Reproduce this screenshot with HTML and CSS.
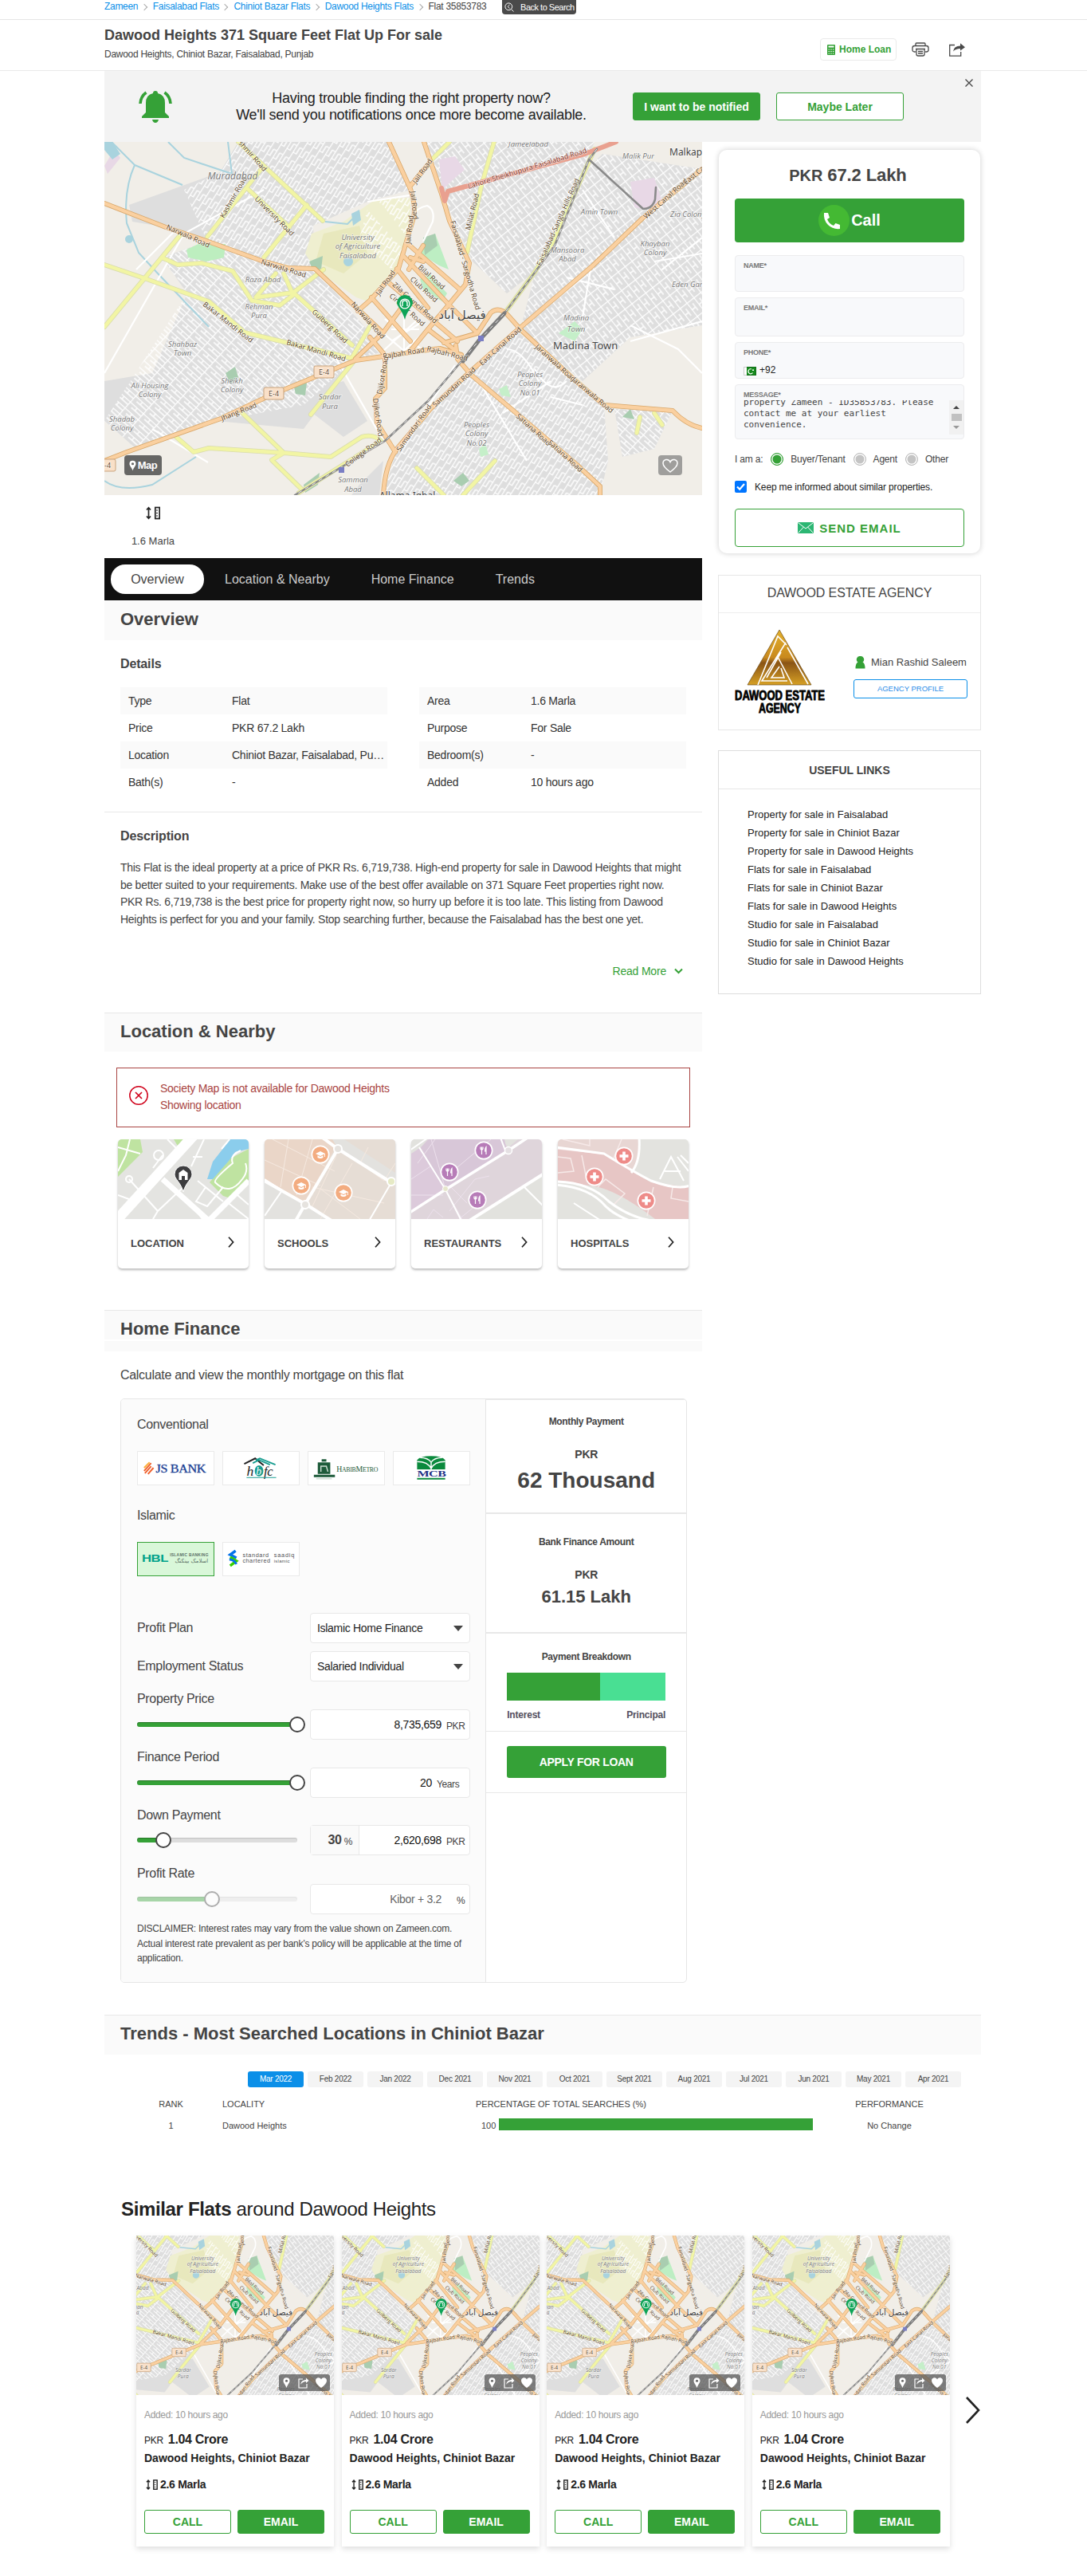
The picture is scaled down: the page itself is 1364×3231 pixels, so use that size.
FILE: index.html
```html
<!DOCTYPE html>
<html lang="en">
<head>
<meta charset="utf-8">
<title>Dawood Heights 371 Square Feet Flat Up For sale</title>
<link rel="stylesheet" href="styles.css">
</head>
<body>
<svg class="defs" aria-hidden="true">
  <defs>
    <pattern id="st-a" width="19" height="9" patternUnits="userSpaceOnUse" patternTransform="rotate(-58)"><path d="M0 .5H19M.5 0V5M10 5V9M0 5H10" stroke="#fff" stroke-width="1.3"/></pattern>
    <pattern id="st-b" width="11" height="21" patternUnits="userSpaceOnUse" patternTransform="rotate(-38)"><path d="M0 .5H11M.5 0V21M6 5V16M0 11H6" stroke="#fff" stroke-width="1.4"/></pattern>
    <pattern id="st-c" width="22" height="10" patternUnits="userSpaceOnUse" patternTransform="rotate(42)"><path d="M0 .5H22M.5 0V10M12 0V5M6 5H22" stroke="#fff" stroke-width="1.4"/></pattern>
    <g id="citymap">
      <rect width="750" height="443" fill="#f1eee8"/>
      <g id="zones" fill="#dedede">
        <path d="M31 79 145 38 168 0H357L384 60 330 75 262 105 264 159 200 150 77 107 35 100Z"/>
        <path d="M72 145 120 128 230 158H264L352 262 313 274 250 360 140 350 40 385 0 350V300L60 290 104 190Z"/>
        <path d="M401 0H615L563 125 541 162 505 190 462 150 423 65Z"/>
        <path d="M625 15 750 34V230L660 245 600 300 522 235 541 162 563 125 610 30Z"/>
        <path d="M458 289 517 237 586 295 627 330 632 400 622 443H350L367 385 409 335Z"/>
        <path d="M640 335 713 337 690 385 650 395ZM320 430 350 400 345 443H310ZM235 320 300 300 330 350 300 370Z"/>
      </g>
      <path d="M100 60 145 38 168 0H357L384 60 330 75 262 105 264 159 200 150 130 127Z" fill="url(#st-a)"/>
      <path d="M72 145 120 128 230 158H264L352 262 313 274 250 330 140 350 40 385 0 350 104 190Z" fill="url(#st-c)"/>
      <path d="M401 0H615L563 125 541 162 505 190 462 150 423 65Z" fill="url(#st-b)"/>
      <path d="M625 15 750 34V230L660 245 600 300 522 235 541 162 563 125 610 30Z" fill="url(#st-b)"/>
      <path d="M458 289 517 237 586 295 627 330 632 400 622 443H350L367 385 409 335Z" fill="url(#st-a)"/>
      <path d="M640 335 713 337 690 385 650 395Z" fill="url(#st-c)"/>
      <path d="M260 115 300 100 340 72 384 70 384 125 366 160 330 200 316 195 264 159 252 140Z" fill="#efefd0"/>
      <path d="M275 115 320 105 330 140 300 165 265 150Z" fill="#e8e8bd"/>
      <path d="M340 72 384 70 380 120 350 80ZM330 85 375 135 360 160 320 120Z" fill="url(#st-a)"/>
      <path d="M103 135 118 128 152 128 150 145 128 150 105 145Z" fill="#bdeebf"/>
      <path d="M396 140 415 115 432 160 420 155ZM396 172 408 165 430 190 424 200 400 185Z" fill="#bdeec3"/>
      <path d="M400 120 415 115 418 130 402 142ZM257 150 274 143 272 160 262 162Z" fill="#a9cdb0"/>
      <path d="M152 290 164 282 168 295 158 304ZM238 308 254 302 252 318 240 316ZM438 425 450 415 458 425 448 432ZM650 345 660 335 665 348ZM250 430 270 415 268 430 252 440Z" fill="#a9cdb0"/>
      <path d="M420 22 440 18 452 35 440 45 424 60ZM660 50 690 45 700 75 680 85 665 82ZM0 30 12 10 20 20 4 40Z" fill="#e8d8e6"/>
      <path d="M0 0 10 0 20 15 10 22 0 10ZM310 90 320 85 322 98 312 105ZM312 150a6 6 0 1 1-12 0 6 6 0 1 1 12 0M36 122a5 5 0 1 1-10 0 5 5 0 1 1 10 0" fill="#a9d3de"/>
      <path d="M570 240 590 225 600 235 590 250ZM495 310 505 305 510 320 498 318ZM470 385 478 378 482 392 472 395Z" fill="#c5efc9"/>
      <g fill="none" stroke="#a9d3de" stroke-width="2">
        <path d="M9 0 38 29Q24 60 28 102L43 139 67 165 131 232M80 0 100 20 160 40 155 0M38 29 98 54M115 395 60 430Q20 440 0 425M277 100 305 103 320 88"/>
      </g>
      <g fill="none" stroke="#fff" stroke-width="2.2">
        <path d="M0 290 100 115 200 60M40 160 90 110 140 130M330 75 390 66M350 240 376 262 400 240M376 215V262M352 222 400 262M360 235H395M350 262 394 222M360 250 395 228M290 270 350 375M60 360 130 402M440 280 375 380M660 250 750 225M660 230 720 260 750 290M700 160 750 120M690 150 750 140M640 120 600 60M580 170 640 185M610 160 600 220M470 300 530 400M500 340 560 300M540 285Q560 320 580 300M560 320 600 330"/>
        <path d="M385 115Q380 85 405 80 415 85 412 100L400 125M505 260Q525 260 545 300"/>
      </g>
      <g fill="none" stroke-linejoin="round" stroke-linecap="round">
        <g stroke="#d9dcae" stroke-width="6">
          <path id="ylw" d="M168 0 200 30 274 99M200 30 180 55 129 119M180 59 232 107M254 79 200 145M95 117 0 232M0 154 53 172 131 200 176 239 313 272M72 145 92 154 122 152 161 162 185 199 220 205 237 192 225 165M237 189 311 255M237 189 275 160M237 189 190 195 215 165M90 370 112 389 131 384 225 390 284 395 323 370Q338 366 347 375L244 440M173 340 225 390 210 399 249 437M313 275 259 342M489 0 473 55 455 139M433 0 411 22M615 9 563 125 541 162 502 215M392 409 426 443M490 400 450 443M311 270 335 228M672 345 668 365M690 340 700 355"/>
        </g>
        <use href="#ylw" stroke="#f2f5a4" stroke-width="4.4"/>
        <g stroke="#d9a86b" stroke-width="6">
          <path id="orn" d="M0 77 77 107 122 122 200 150 230 158 264 159 347 237M0 400 28 389 146 347 210 317 288 285 315 274 350 269 397 262 421 259 448 267M357 0 384 59Q391 80 388 95L379 125 369 159 333 199 318 212M409 25 384 55M401 0 423 65 433 99 458 152 453 179 428 209 406 235 384 262M382 129 446 185M374 142 433 205 468 240M367 159 406 208M355 175 443 250M335 195 384 250M406 235 441 262M384 145 400 150M400 130 382 160M372 209 350 239 315 272M333 245 350 265M750 34 676 95 613 155 517 237 458 289 409 335 367 385Q352 405 350 443M426 252 468 240 485 214Q495 206 506 217L522 235 586 295 627 330 713 337Q730 355 750 359M441 255 443 272 460 292 519 342 593 405 622 432V443M352 270V309L340 322 342 352 365 389"/>
        </g>
        <use href="#orn" stroke="#fad0a0" stroke-width="4.4"/>
        <path d="M642 0 603 15 431 62 427 74 423 58" stroke="#e9a08f" stroke-width="6"/>
        <path d="M618 9 608 22 565 130 502 215 470 249 406 325 352 375 239 443M608 22 676 84Q688 84 691 72L692 57" stroke="#8a8a8a" stroke-width="2.6"/>
        <path d="M502 215 470 249 450 275" stroke="#7d7d7d" stroke-width="5"/>
        <path d="M618 9 608 22 565 130 502 215 470 249 406 325 352 375 239 443" stroke="#e9e9e9" stroke-width="1" stroke-dasharray="5 5" stroke-linecap="butt"/>
      </g>
      <path d="M469 243h7v7h-7zM294 408h7v7h-7z" fill="#7a7ec4"/>
      <g class="road" fill="#57401c">
        <text transform="translate(77 109) rotate(24)">Narwala Road</text>
        <text transform="translate(196 153) rotate(17)">Narwala Road</text>
        <text transform="translate(309 204) rotate(48)">Narwala Road</text>
        <text transform="translate(168 2) rotate(48)">shmir Road</text>
        <text transform="translate(150 96) rotate(-60)">Kashmir Road</text>
        <text transform="translate(188 72) rotate(45)">University Road</text>
        <text transform="translate(123 205) rotate(38)">Bakar Mandi Road</text>
        <text transform="translate(228 254) rotate(16)">Bakar Mandi Road</text>
        <text transform="translate(260 214) rotate(43)">Gulberg Road</text>
        <text transform="translate(148 350) rotate(-22)">Jhang Road</text>
        <text transform="translate(350 272) rotate(-9)">Rajbah Road</text>
        <text transform="translate(404 262) rotate(14)">Rajbah Road</text>
        <text transform="translate(384 62) rotate(84)">Jail Road</text>
        <text transform="translate(391 53) rotate(-54)">Jail Road</text>
        <text transform="translate(384 128) rotate(-84)">Jail Road</text>
        <text transform="translate(345 193) rotate(-55)">Jail Road</text>
        <text transform="translate(393 158) rotate(42)">Bilal Road</text>
        <text transform="translate(383 173) rotate(42)">Club Road</text>
        <text transform="translate(361 180) rotate(42)">Zila Council Road</text>
        <text transform="translate(357 194) rotate(42)">Circular Road</text>
        <text transform="translate(434 100) rotate(74)">Faisalabad - Sargodha Road</text>
        <text transform="translate(459 111) rotate(-76)">Millat Road</text>
        <text transform="translate(457 59) rotate(-17)" fill="#7c2f22">Lahore Sheikhupura Faisalabad Road</text>
        <text transform="translate(548 156) rotate(-66)">Faisalabad-Sangla Hills Road</text>
        <text transform="translate(680 97) rotate(-42)">West Canal Road</text>
        <text transform="translate(730 54) rotate(-40)">East Canal Road</text>
        <text transform="translate(474 281) rotate(-42)">East Canal Road</text>
        <text transform="translate(540 258) rotate(42)">Jaranwala Road</text>
        <text transform="translate(586 299) rotate(40)">Jaranwala Road</text>
        <text transform="translate(516 345) rotate(42)">Satiana Road</text>
        <text transform="translate(556 378) rotate(42)">Satiana Road</text>
        <text transform="translate(415 333) rotate(-42)">Samundari Road</text>
        <text transform="translate(371 389) rotate(-55)">Samundari Road</text>
        <text transform="translate(348 317) rotate(-80)">Dijkot Road</text>
        <text transform="translate(337 322) rotate(82)">Dijkot Road</text>
        <text transform="translate(305 408) rotate(-37)">College Road</text>
      </g>
      <g class="area" text-anchor="middle" fill="#777">
        <text x="161" y="47" font-size="12">Muradabad</text>
        <text x="532" y="6">Jameelabad</text><text x="670" y="21">Malik Pur</text>
        <text x="318" y="123">University</text><text x="318" y="134">of Agriculture</text><text x="318" y="146">Faisalabad</text>
        <text x="199" y="176">Raza Abad</text><text x="194" y="210">Rehman</text><text x="194" y="221">Pura</text>
        <text x="98" y="257">Shahbaz</text><text x="98" y="268">Town</text>
        <text x="57" y="309">Ali Housing</text><text x="57" y="320">Colony</text>
        <text x="160" y="303">Sheikh</text><text x="160" y="314">Colony</text>
        <text x="22" y="351">Shadab</text><text x="22" y="362">Colony</text>
        <text x="283" y="323">Sardar</text><text x="283" y="335">Pura</text>
        <text x="312" y="427">Samman</text><text x="312" y="439">Abad</text>
        <text x="621" y="91">Amin Town</text><text x="581" y="139">Mansoora</text><text x="581" y="150">Abad</text>
        <text x="691" y="131">Khayban</text><text x="691" y="142">Colony</text>
        <text x="592" y="224">Madina</text><text x="592" y="238">Town</text>
        <text x="534" y="295">Peoples</text><text x="534" y="306">Colony</text><text x="534" y="318">No.01</text>
        <text x="467" y="358">Peoples</text><text x="467" y="369">Colony</text><text x="467" y="381">No.02</text>
        <text x="732" y="94">Zia Colony</text><text x="734" y="182">Eden Gard</text>
      </g>
      <g class="town" fill="#444">
        <text x="563" y="260" font-size="13">Madina Town</text>
        <text x="709" y="17" font-size="12">Malkapur</text>
        <text x="345" y="448" font-size="12">Allama Iqbal</text>
        <text x="449" y="222" font-size="15" text-anchor="middle">فیصل آباد</text>
      </g>
      <g stroke="#c9a37c" fill="#f9e0c8">
        <rect x="263" y="281" width="25" height="15" rx="2"/><rect x="200" y="308" width="25" height="15" rx="2"/><rect x="-10" y="398" width="24" height="15" rx="2"/>
      </g>
      <g class="badge" fill="#5d452b"><text x="269" y="292">E-4</text><text x="206" y="319">E-4</text><text x="-5" y="409">E-4</text></g>
      <path d="M377 223C374 211 367 206 367 202a10 10 0 0 1 20 0c0 4-7 9-10 21Z" fill="#0da457"/>
      <circle cx="377" cy="203" r="6.6" fill="#fff"/><circle cx="377" cy="203" r="5.2" fill="#0da457"/>
      <path d="M374 206v-4a3 3 0 0 1 6 0v4" fill="none" stroke="#fff" stroke-width="1.4"/>
    </g>
    <symbol id="i-area" viewBox="0 0 18 16"><path d="M3.5 2v12M1 4 3.5 1.2 6 4M1 12l2.500 2.800L6 12" fill="none" stroke="#222" stroke-width="1.700"/><rect x="11.800" y="1" width="5.400" height="14" fill="none" stroke="#222" stroke-width="1.700"/><path d="M13 4.500h2M13 8h2M13 11.500h2" stroke="#222"/></symbol>
    <symbol id="i-next" viewBox="0 0 8 14"><path d="M1 .800 6.600 7 1 13.200" fill="none" stroke="#222" stroke-width="1.700"/></symbol>
    <symbol id="i-pin" viewBox="0 0 10 14"><path fill-rule="evenodd" d="M5 14C3.500 9.500.500 7.500.500 4.600a4.500 4.500 0 0 1 9 0C9.500 7.500 6.500 9.500 5 14ZM5 6.300a1.800 1.800 0 1 0 0-3.600 1.800 1.800 0 0 0 0 3.600Z" fill="#fff"/></symbol>
    <symbol id="i-cap" viewBox="-12 -12 24 24"><circle r="11.500" fill="#fff"/><circle r="9.800" fill="#f3ac80"/><path d="M-6-1 0-4 6-1 0 2ZM-3.500 1.300V4Q0 5.800 3.500 4V1.300L0 3ZM5-1h.900v4H5Z" fill="#fff"/></symbol>
    <symbol id="i-fork" viewBox="-12 -12 24 24"><circle r="11.500" fill="#fff"/><circle r="9.800" fill="#b77cb8"/><path d="M-4-4.500V-2Q-2.500 1-1-2V-4.500M-2.500-4.500V5M3 5V-4.500Q1.500-3 1.600 1H3" fill="none" stroke="#fff" stroke-width="1.200"/></symbol>
    <symbol id="i-cross" viewBox="-12 -12 24 24"><circle r="11.500" fill="#fff"/><circle r="9.800" fill="#ee8b88"/><path d="M0-5.500V5.500M-5.500 0H5.500" stroke="#fff" stroke-width="3.600"/></symbol>
    <symbol id="i-tools" viewBox="0 0 64 21"><path d="M9.500 17C8 12.500 5.500 11 5.500 8.200a4 4 0 0 1 8 0C13.500 11 11 12.500 9.500 17Z" fill="#fff"/><circle cx="9.500" cy="8.300" r="1.500" fill="#666"/><path d="M30 6h-5v11h10v-5" fill="none" stroke="#fff" stroke-width="1.200"/><path d="M27 13q1-6 7-6V4.500L37.500 8 34 11V9q-4 0-7 4Z" fill="#fff"/><path d="M53 17q-7-5-7-9c0-4 5.500-5 7-1.500C54.500 3 60 4 60 8q0 4-7 9Z" fill="#fff"/></symbol>
  </defs>
</svg>

<nav class="crumbs">
  <a>Zameen</a><i></i><a>Faisalabad Flats</a><i></i><a>Chiniot Bazar Flats</a><i></i><a>Dawood Heights Flats</a><i></i><span>Flat 35853783</span>
  <button class="back"><svg width="12" height="12" viewBox="0 0 12 12" fill="none" stroke="#fff"><circle cx="5.300" cy="5.300" r="4.400"/><path d="m8.500 8.500 3 3M6.500 3 4.200 5.300l2.300 2.300"/></svg>Back to Search</button>
</nav>
<header class="head">
  <div class="wrap head-in">
    <div>
      <h1>Dawood Heights 371 Square Feet Flat Up For sale</h1>
      <p>Dawood Heights, Chiniot Bazar, Faisalabad, Punjab</p>
    </div>
    <div class="head-act">
      <span class="loan"><svg width="10" height="13" viewBox="0 0 10 13"><rect width="10" height="13" rx="1" fill="#35a137"/><path d="M1.500 1.500h7v2h-7z" fill="#fff"/><path d="M1.500 6h7M1.500 8.500h7M1.500 11h7" stroke="#fff" stroke-dasharray="1.500 1.200"/></svg>Home Loan</span>
      <svg class="print" width="22" height="18" viewBox="0 0 22 18" fill="none" stroke="#4a4a4a" stroke-width="1.300"><path d="M5 4V2q0-1 1-1h10q1 0 1 1v2M5 12H3.500Q1 12 1 9.500V7q0-2.500 2.500-2.500h15Q21 4.500 21 7v2.500q0 2.500-2.500 2.500H17M5 8.500h12M6 8.500V15q0 2 2 2h6q2 0 2-2V8.500M8 11.500h6M8 14h6"/></svg>
      <svg width="20" height="17" viewBox="0 0 20 17"><path d="M7 2.500H.700v13.700h14V11" fill="none" stroke="#4a4a4a" stroke-width="1.300"/><path d="M5 10.500Q6 3.500 14 3.500V.300L20 5.200 14 9.500V7Q8 7 5 10.500Z" fill="#4a4a4a"/></svg>
    </div>
  </div>
</header>

<div class="wrap">
  <section class="notify">
    <svg class="bell" width="42" height="40" viewBox="0 0 42 40"><path d="M21 0q3 0 3 3 9 2 9 12v12l5 5v2H4v-2l5-5V15Q9 5 18 3q0-3 3-3ZM17 36h8q-1 4-4 4t-4-4Z" fill="#35a137"/><path d="M9.500 2Q2.500 7 2 16M32.500 2q7 5 7.500 14" fill="none" stroke="#35a137" stroke-width="3.600"/></svg>
    <p>Having trouble finding the right property now?<br>We'll send you notifications once more become available.</p>
    <button class="btn solid">I want to be notified</button>
    <button class="btn line">Maybe Later</button>
    <svg class="close" width="10" height="10" viewBox="0 0 10 10"><path d="m.500.500 9 9m0-9-9 9" stroke="#444" stroke-width="1.300"/></svg>
  </section>

  <div class="cols">
    <main>
      <div class="hero">
        <svg width="750" height="443" viewBox="0 0 750 443"><use href="#citymap"/></svg>
        <span class="tag-map"><svg width="9" height="14"><use href="#i-pin"/></svg>Map</span>
        <span class="tag-fav"><svg width="20" height="18" viewBox="0 0 20 18"><path d="M10 17Q1 10.500 1 6c0-5 7-6.500 9-1.500C12 -.500 19 1 19 6q0 4.500-9 11Z" fill="none" stroke="#fff" stroke-width="1.500"/></svg></span>
      </div>
      <div class="stat"><svg width="18" height="17"><use href="#i-area"/></svg><span>1.6 Marla</span></div>
      <nav class="tabs"><a class="on">Overview</a><a>Location &amp; Nearby</a><a>Home Finance</a><a>Trends</a></nav>
      <h2 class="bar first">Overview</h2>
      <h3>Details</h3>
      <div class="facts">
        <dl>
          <div><dt>Type</dt><dd>Flat</dd></div>
          <div><dt>Price</dt><dd>PKR 67.2 Lakh</dd></div>
          <div><dt>Location</dt><dd>Chiniot Bazar, Faisalabad, Punjab</dd></div>
          <div><dt>Bath(s)</dt><dd>-</dd></div>
        </dl>
        <dl>
          <div><dt>Area</dt><dd>1.6 Marla</dd></div>
          <div><dt>Purpose</dt><dd>For Sale</dd></div>
          <div><dt>Bedroom(s)</dt><dd>-</dd></div>
          <div><dt>Added</dt><dd>10 hours ago</dd></div>
        </dl>
      </div>
      <section class="desc">
        <h3>Description</h3>
        <p>This Flat is the ideal property at a price of PKR Rs. 6,719,738. High-end property for sale in Dawood Heights that might<br>be better suited to your requirements. Make use of the best offer available on 371 Square Feet properties right now.<br>PKR Rs. 6,719,738 is the best price for property right now, so hurry up before it is too late. This listing from Dawood<br>Heights is perfect for you and your family. Stop searching further, because the Faisalabad has the best one yet.</p>
        <a class="more">Read More<svg width="11" height="8" viewBox="0 0 11 8"><path d="m1 1.500 4.500 4.500L10 1.500" fill="none" stroke="#35a137" stroke-width="2"/></svg></a>
      </section>

      <h2 class="bar">Location &amp; Nearby</h2>
      <div class="alert">
        <svg width="24" height="24" viewBox="0 0 24 24" fill="none" stroke="#d0021b"><circle cx="12" cy="12" r="11.200" stroke-width="1.500"/><path d="m8 8 8 8m0-8-8 8" stroke-width="1.700"/></svg>
        <p>Society Map is not available for Dawood Heights<br>Showing location</p>
      </div>
      <div class="near">
        <a><svg viewBox="0 0 164 100"><rect width="164" height="100" fill="#e4e4e1"/><path d="M0 0H28L31 16 0 47ZM70 0H82L76 10ZM164 12 141 24 115 54 132 71 141 74 164 51Z" fill="#bfe3a1"/><path d="M141 0H164V12L147 16 140 26 119 50 112 50 119 28Z" fill="#8bcdec"/><g fill="none" stroke="#fff"><path d="M96-6-6 106" stroke-width="13"/><path d="M56 50 116 104M164 52 112 104" stroke-width="7"/><path d="M14 50 50 90 82 60M50 90 44 100M0 70 22 78M30 62 0 100M56 20 44 36M62 0 74 12M108 0 92 34M94 22h12M106 100 90 78M110 60 98 78 112 84 132 60M150 70 164 82M136 78 164 100M100 52 132 78M15 0 10 20 0 40M0 10 28 18M140 0 130 12" stroke-width="2"/><path d="M154 14Q140 20 144 30 120 50 122 54 140 72 156 50 164 40 160 30" stroke-width="2"/><circle cx="51" cy="20" r="6" stroke-width="2"/><circle cx="14" cy="50" r="4" stroke-width="2"/></g><path d="M82 66C79 54 71 50 71 44a11 11 0 0 1 22 0c0 6-8 10-11 22Z" fill="#3d3d3f" stroke="#fff"/><path d="M76.500 46v-4l5.500-4 5.500 4v9H84v-5h-4v5h-3.500Z" fill="#fff"/></svg><span>LOCATION<svg width="8" height="14"><use href="#i-next"/></svg></span></a>
        <a><svg viewBox="0 0 164 100"><rect width="164" height="100" fill="#e6ddd5"/><path d="M0 0H94L51 81 0 52Z" fill="#ead6c8"/><path d="M0 52 51 81 38 100H0ZM51 81 82 100H40ZM68 0H164V48L155 52 92 12 85 0Z" fill="#e3e2df"/><path d="M100 0 164 0V42Z" fill="#e6ddd5"/><g stroke="#f5e9e0" fill="none"><path d="M10 0 88 40M0 26 70 58M30 0 20 60M60 0 40 70M70 62 120 100M90 20 60 84M110 30 70 100M60 60 150 80M130 10 120 30 150 52 164 30"/></g><g stroke="#fff" fill="none" stroke-width="4"><path d="M70-4 92 12 162 56M92 12 51 81 38 104M-4 50 51 81 84 102"/><path d="M158 56 130 104M0 96 22 64 0 50" stroke-width="2"/></g><g fill="#e6e3df" stroke="#fff" stroke-width="2"><circle cx="92" cy="12" r="5"/><circle cx="51" cy="82" r="5"/><circle cx="159" cy="53" r="5" fill="#e6eac5"/></g><use href="#i-cap" x="58" y="7" width="24" height="24"/><use href="#i-cap" x="34" y="46" width="24" height="24"/><use href="#i-cap" x="87" y="55" width="24" height="24"/></svg><span>SCHOOLS<svg width="8" height="14"><use href="#i-next"/></svg></span></a>
        <a><svg viewBox="0 0 164 100"><rect width="164" height="100" fill="#dfd5db"/><path d="M0 0H20L10 14 0 18ZM122 10 134 0H112ZM164 44V100H72Z" fill="#e2e2de"/><path d="M12 10 22 0H117L120 14 43 63Z" fill="#d8c7d8"/><path d="M0 18 12 10 43 63 0 90Z" fill="#dccadb"/><g stroke="#ece0ec" fill="none"><path d="M25 0 43 63 66 104M40 50 100 0M8 30 30 0M0 50 24 34M48 90 80 50 98 46M60 100 90 76M0 70 40 70M20 100 28 88 40 98M50 60 70 80"/></g><g stroke="#fff" fill="none"><path d="M-2 92 43 63 122 14 146-2" stroke-width="3.500"/><path d="M70 104 168 42" stroke-width="4"/><path d="M-2 14 24-4M10 10 43 63 64 104M118 14 112-2M142 60 166 84" stroke-width="2"/></g><circle cx="122" cy="14" r="4.500" fill="#e5e0e3" stroke="#fff" stroke-width="1.500"/><circle cx="43" cy="62" r="3.500" fill="#e6e6cc" stroke="#fff"/><use href="#i-fork" x="79" y="2" width="24" height="24"/><use href="#i-fork" x="36" y="29" width="24" height="24"/><use href="#i-fork" x="71" y="64" width="24" height="24"/></svg><span>RESTAURANTS<svg width="8" height="14"><use href="#i-next"/></svg></span></a>
        <a><svg viewBox="0 0 164 100"><rect width="164" height="100" fill="#e3e3df"/><path d="M0 0H102Q102 30 92 40L58 18 0 12Z" fill="#e8d6d3"/><path d="M0 12 58 18Q100 45 117 54L164 60V100H122Q70 60 39 58L0 52Z" fill="#e7c6c5"/><g stroke="#f6e9e8" fill="none" stroke-width="1.500"><path d="M0 22 16 24 20 40 0 42M30 20 36 50M50 60 60 50 84 68 70 82M120 60 112 96M0 12 58 18M144 60 142 74 164 78M6 0 40 8V0M80 0 70 24"/></g><g stroke="#fff" fill="none" stroke-width="3"><path d="M-2 10 58 18Q90 38 117 52 150 64 166 58M102-2Q104 28 92 42"/><path d="M-2 53Q40 54 64 78 90 98 118 102M-2 57Q40 60 60 84 70 94 90 102"/><path d="M128 50 142 22 158 52M134 40H154M150 22 164 40M154 20l10 10M20 80 54 102" stroke-width="2"/></g><use href="#i-cross" x="71" y="9" width="24" height="24"/><use href="#i-cross" x="34" y="35" width="24" height="24"/><use href="#i-cross" x="99" y="65" width="24" height="24"/></svg><span>HOSPITALS<svg width="8" height="14"><use href="#i-next"/></svg></span></a>
      </div>

      <h2 class="bar split">Home Finance</h2>
      <p class="lead">Calculate and view the monthly mortgage on this flat</p>
      <div class="fin">
        <div class="fin-l">
          <h4>Conventional</h4>
          <div class="banks first">
            <span><svg viewBox="0 0 96 41"><path d="m8 24 9-10M9 27 17 18M13 28l7-8" stroke="#f0612d" stroke-width="2"/><path d="m8 20 7-7" stroke="#fbb03b" stroke-width="2"/><text x="23" y="26" font-family="Liberation Serif" font-size="14" fill="#1b3f94" stroke="#1b3f94" stroke-width=".3" textLength="64" lengthAdjust="spacingAndGlyphs">JS BANK</text></svg></span>
            <span><svg viewBox="0 0 96 41"><path d="m27 15 14-7 11 9" fill="none" stroke="#222" stroke-width="2"/><path d="m42 10 5-2 20 8M38 14l8-4 14 6" fill="none" stroke="#169c8f" stroke-width="1.800"/><ellipse cx="46" cy="24" rx="5.500" ry="7" fill="#169c8f"/><text x="30" y="30" font-family="Liberation Serif" font-style="italic" font-size="18" fill="#222">h</text><text x="42" y="29" font-family="Liberation Serif" font-style="italic" font-size="14" fill="#fff">b</text><text x="52" y="30" font-family="Liberation Serif" font-style="italic" font-size="17" fill="#222">fc</text><path d="M30 32.500h38" stroke="#169c8f"/></svg></span>
            <span><svg viewBox="0 0 96 41"><path d="M12 13h16v15H12zM17 9h6v3h-6zM7 29h27v3H7z" fill="#1d5b3a"/><path d="M16 25v-7h7l2 7M10 34h20" stroke="#cfe0d5" fill="none" stroke-width="1.500"/><text x="36" y="25" font-family="Liberation Serif" font-size="10" fill="#1d5b3a" textLength="53" lengthAdjust="spacingAndGlyphs">H<tspan font-size="8">ABIB</tspan>M<tspan font-size="8">ETRO</tspan></text></svg></span>
            <span><svg viewBox="0 0 96 41"><path d="M30 22V10q4-5 18-5t18 5v12Z" fill="#0b8a3d"/><path d="M48 22V12M30 12q14 0 18 9 4-9 18-9M34 7q10 0 14 6 4-6 14-6" fill="none" stroke="#fff" stroke-width="1.500"/><text x="30" y="31" font-family="Liberation Serif" font-weight="bold" font-size="11" fill="#1d2f85" textLength="37" lengthAdjust="spacingAndGlyphs">MCB</text><path d="M30 34h36" stroke="#0b8a3d" stroke-width="2"/></svg></span>
          </div>
          <h4 class="isl">Islamic</h4>
          <div class="banks">
            <span class="sel"><svg viewBox="0 0 96 41"><text x="5" y="24" font-family="Liberation Sans" font-weight="bold" font-size="14" fill="#00a189" textLength="34" lengthAdjust="spacingAndGlyphs">HBL</text><g fill="#5b6f66"><text x="41" y="17" font-family="Liberation Sans" font-weight="bold" font-size="5" textLength="49">ISLAMIC BANKING</text><text x="90" y="25" font-family="DejaVu Sans" font-size="7" text-anchor="start" direction="rtl">اسلامک بینکنگ</text></g></svg></span>
            <span><svg viewBox="0 0 96 41"><path d="m16 10-7 5 8 4" fill="none" stroke="#0473ea" stroke-width="3.500"/><path d="m9 18 8 5-8 6" fill="none" stroke="#38d200" stroke-width="3.500"/><path d="M8 21q6 0 9 6" fill="none" stroke="#0473ea" stroke-width="3"/><g font-family="Liberation Sans" font-size="7.500" fill="#525355"><text x="25" y="18" textLength="33">standard</text><text x="25" y="25" textLength="35">chartered</text><text x="65" y="18" textLength="26">saadiq</text><text x="65" y="25" font-size="6" textLength="20">islamic</text></g></svg></span>
          </div>
          <div class="row pick"><label>Profit Plan</label><span class="sbox">Islamic Home Finance<b></b></span></div>
          <div class="row pick two"><label>Employment Status</label><span class="sbox">Salaried Individual<b></b></span></div>
          <div class="rng"><label>Property Price</label><div class="row"><div class="sl"><i class="full"></i><u></u></div><span class="ibox">8,735,659<small>PKR</small></span></div></div>
          <div class="rng"><label>Finance Period</label><div class="row"><div class="sl"><i class="full"></i><u></u></div><span class="ibox yrs">20<small>Years</small></span></div></div>
          <div class="rng dp"><label>Down Payment</label><div class="row"><div class="sl p16"><i></i><u></u></div><span class="ibox"><em>30<small>%</small></em>2,620,698<small>PKR</small></span></div></div>
          <div class="rng"><label>Profit Rate</label><div class="row"><div class="sl p47 dim"><i></i><u></u></div><span class="ibox rate">Kibor + 3.2<small>%</small></span></div></div>
          <p class="disc">DISCLAIMER: Interest rates may vary from the value shown on Zameen.com.<br>Actual interest rate prevalent as per bank’s policy will be applicable at the time of<br>application.</p>
        </div>
        <div class="fin-r">
          <div class="c1"><h5>Monthly Payment</h5><b>PKR</b><strong>62 Thousand</strong></div>
          <div class="c2"><h5>Bank Finance Amount</h5><b>PKR</b><strong>61.15 Lakh</strong></div>
          <div class="c3"><h5>Payment Breakdown</h5><div class="split2"><i></i></div><p><span>Interest</span><span>Principal</span></p></div>
          <div class="c4"><button>APPLY FOR LOAN</button></div>
        </div>
      </div>
    </main>

    <aside>
      <section class="contact">
        <div class="price"><small>PKR</small> 67.2 Lakh</div>
        <button class="call"><span><svg width="22" height="22" viewBox="0 0 22 22"><path d="M1 1h5l2 6-3 2q2.500 6 8 8l2.500-3L21 16v5Q12 22 6 16 0 10 1 1Z" fill="#fff"/></svg></span>Call</button>
        <div class="fld n">NAME*</div>
        <div class="fld e">EMAIL*</div>
        <div class="fld p">PHONE*<div><svg width="16" height="11" viewBox="0 0 16 11"><path d="M0 0h4v11H0z" fill="#fff"/><path d="M4 0h12v11H4z" fill="#178a1e"/><path d="M11.500 7.500a3 3 0 1 1-1.500-4.500" fill="none" stroke="#fff" stroke-width="1.200"/><path d="M11 3.500h2v1.500h-2z" fill="#fff"/><path d="M.500.500h15v10H.500z" fill="none" stroke="#0003"/></svg>+92</div></div>
        <div class="fld m">MESSAGE*<div class="ta"><pre>property Zameen - ID35853783. Please
contact me at your earliest
convenience.</pre><span class="sb"><i class="up"></i><u></u><i class="dn"></i></span></div></div>
        <div class="who">I am a:<i class="on"></i><span>Buyer/Tenant</span><i></i><span>Agent</span><i></i><span>Other</span></div>
        <div class="keep"><svg width="15" height="15" viewBox="0 0 15 15"><rect width="15" height="15" rx="2" fill="#0075ff"/><path d="m3 7.500 3.200 3.200L12 4" fill="none" stroke="#fff" stroke-width="2.200"/></svg>Keep me informed about similar properties.</div>
        <button class="send"><svg width="20" height="14" viewBox="0 0 20 14"><rect width="20" height="14" rx="1.500" fill="#2cb673"/><path d="m1 1 9 7L19 1M1 13l6.500-7M19 13l-6.500-7" fill="none" stroke="#fff"/></svg>SEND EMAIL</button>
      </section>
      <section class="agency">
        <h4>DAWOOD ESTATE AGENCY</h4>
        <div class="ag-in">
          <svg width="115" height="112" viewBox="0 0 115 112"><defs><linearGradient id="gold" x1="0" y1="0" x2="0" y2="1"><stop offset="0" stop-color="#e3b02c"/><stop offset=".5" stop-color="#c98a1e"/><stop offset=".6" stop-color="#8a5416"/><stop offset="1" stop-color="#d6a024"/></linearGradient></defs><path d="M56 4 96 73H16Z" fill="url(#gold)" stroke="#6b4a17" stroke-width=".7"/><path d="M65 23 54 12 29 73M64 20 34 68H66M58 32 40 64M66 26 92 72M54 38 72 72M56 50 46 64H62L58 52" fill="none" stroke="#fff" stroke-width="1.600"/><g font-family="Liberation Sans" font-weight="bold" fill="#000" stroke="#000" stroke-width=".8"><text x="0" y="92" font-size="16" textLength="113" lengthAdjust="spacingAndGlyphs">DAWOOD ESTATE</text><text x="30" y="107.500" font-size="16" textLength="53" lengthAdjust="spacingAndGlyphs">AGENCY</text></g></svg>
          <div class="ag-r"><p><svg width="13" height="16" viewBox="0 0 13 16"><path d="M6.500 0a4.200 4.200 0 0 1 3 7.500Q12.500 9 12.500 15.500H.500Q.500 9 3.500 7.500a4.200 4.200 0 0 1 3-7.500Z" fill="#35a137"/></svg>Mian Rashid Saleem</p><a>AGENCY PROFILE</a></div>
        </div>
      </section>
      <section class="links">
        <h4>USEFUL LINKS</h4>
        <ul><li>Property for sale in Faisalabad</li><li>Property for sale in Chiniot Bazar</li><li>Property for sale in Dawood Heights</li><li>Flats for sale in Faisalabad</li><li>Flats for sale in Chiniot Bazar</li><li>Flats for sale in Dawood Heights</li><li>Studio for sale in Faisalabad</li><li>Studio for sale in Chiniot Bazar</li><li>Studio for sale in Dawood Heights</li></ul>
      </section>
    </aside>
  </div>

  <section class="trends">
    <h2 class="bar">Trends - Most Searched Locations in Chiniot Bazar</h2>
    <div class="months"><a class="on">Mar 2022</a><a>Feb 2022</a><a>Jan 2022</a><a>Dec 2021</a><a>Nov 2021</a><a>Oct 2021</a><a>Sept 2021</a><a>Aug 2021</a><a>Jul 2021</a><a>Jun 2021</a><a>May 2021</a><a>Apr 2021</a></div>
    <div class="trow th"><span>RANK</span><span>LOCALITY</span><span>PERCENTAGE OF TOTAL SEARCHES (%)</span><span>PERFORMANCE</span></div>
    <div class="trow td"><span>1</span><span>Dawood Heights</span><span class="pct">100<i></i></span><span>No Change</span></div>
  </section>

  <section class="similar">
    <h2><b>Similar Flats</b> around Dawood Heights</h2>
    <div class="cards">
      <article><div class="th-map"><svg width="248" height="200" viewBox="199 79 354 286" preserveAspectRatio="none"><use href="#citymap"/></svg><svg class="tools" width="64" height="21"><use href="#i-tools"/></svg></div><p class="add">Added: 10 hours ago</p><p class="pr"><small>PKR</small>1.04 Crore</p><p class="nm">Dawood Heights, Chiniot Bazar</p><p class="ar"><svg width="15" height="13"><use href="#i-area"/></svg>2.6 Marla</p><div class="bt"><a>CALL</a><a class="g">EMAIL</a></div></article>
      <article><div class="th-map"><svg width="248" height="200" viewBox="199 79 354 286" preserveAspectRatio="none"><use href="#citymap"/></svg><svg class="tools" width="64" height="21"><use href="#i-tools"/></svg></div><p class="add">Added: 10 hours ago</p><p class="pr"><small>PKR</small>1.04 Crore</p><p class="nm">Dawood Heights, Chiniot Bazar</p><p class="ar"><svg width="15" height="13"><use href="#i-area"/></svg>2.6 Marla</p><div class="bt"><a>CALL</a><a class="g">EMAIL</a></div></article>
      <article><div class="th-map"><svg width="248" height="200" viewBox="199 79 354 286" preserveAspectRatio="none"><use href="#citymap"/></svg><svg class="tools" width="64" height="21"><use href="#i-tools"/></svg></div><p class="add">Added: 10 hours ago</p><p class="pr"><small>PKR</small>1.04 Crore</p><p class="nm">Dawood Heights, Chiniot Bazar</p><p class="ar"><svg width="15" height="13"><use href="#i-area"/></svg>2.6 Marla</p><div class="bt"><a>CALL</a><a class="g">EMAIL</a></div></article>
      <article><div class="th-map"><svg width="248" height="200" viewBox="199 79 354 286" preserveAspectRatio="none"><use href="#citymap"/></svg><svg class="tools" width="64" height="21"><use href="#i-tools"/></svg></div><p class="add">Added: 10 hours ago</p><p class="pr"><small>PKR</small>1.04 Crore</p><p class="nm">Dawood Heights, Chiniot Bazar</p><p class="ar"><svg width="15" height="13"><use href="#i-area"/></svg>2.6 Marla</p><div class="bt"><a>CALL</a><a class="g">EMAIL</a></div></article>
      <svg class="go" width="19" height="34" viewBox="0 0 19 34"><path d="m2 1 15 16L2 33" fill="none" stroke="#222" stroke-width="2.600"/></svg>
    </div>
  </section>
</div>
</body>
</html>
```
FILE: styles.css
```css
* { box-sizing: border-box; }
html { height: 3231px; overflow: hidden; }
body { margin: 0; height: 3231px; overflow: hidden; background: #fff; color: #444; font: 14px "Liberation Sans", Arial, sans-serif; }
h1, h2, h3, h4, h5, p, dl, dd, ul, pre { margin: 0; padding: 0; font-weight: 400; }
button { font-family: inherit; padding: 0; border: 0; background: none; }
svg { display: block; flex: none; }
i, em { font-style: normal; }
.defs { position: absolute; width: 0; height: 0; }
.wrap { width: 1100px; margin-left: 131px; }

/* map lettering */
.road { font: 9px "Open Sans", "Noto Sans", sans-serif; }
.road text, .area text, .badge text, .town text { paint-order: stroke; stroke: #fff9; stroke-width: 1.500px; }
.area { font: italic 9.500px "Open Sans", "Noto Sans", sans-serif; }
.town { font-family: "Noto Sans", "DejaVu Sans", sans-serif; }
.badge { font: 9px "Open Sans", sans-serif; }

/* breadcrumb and title */
.crumbs { display: flex; align-items: flex-start; height: 25px; padding-left: 131px; border-bottom: 1px solid #e5e5e5; font-size: 12px; line-height: 17px; letter-spacing: -.3px; }
.crumbs a { color: #0b8fe8; }
.crumbs i { width: 6px; height: 6px; margin: 6px 8px 0 4.500px; border: solid #aaa; border-width: 1px 1px 0 0; transform: rotate(45deg); }
.back { display: flex; align-items: center; justify-content: center; gap: 8px; width: 93px; height: 18px; margin-left: 20px; border-radius: 0 0 4px 4px; background: #4a4a4a; color: #fff; font-size: 11px; letter-spacing: -.5px; }
.head { height: 64px; border-bottom: 1px solid #e9e9e9; }
.head-in { display: flex; justify-content: space-between; }
.head h1 { margin-top: 8px; font-size: 18px; font-weight: 700; line-height: 22px; }
.head p { margin-top: 5px; font-size: 12px; line-height: 16px; letter-spacing: -.27px; }
.head-act { display: flex; align-items: center; height: 28px; margin: 23px 20px 0 0; }
.loan { display: flex; align-items: center; gap: 5px; width: 96px; height: 28px; padding-left: 8px; border: 1px solid #eaeaea; border-radius: 4px; color: #35a137; font-size: 12px; font-weight: 700; }
.print { margin: 0 25px 0 19px; }

.notify { position: relative; display: flex; height: 89px; padding-top: 24px; background: #f3f3f3; }
.bell { margin: 1px 0 0 43px; }
.notify p { width: 440px; margin: 0 58px 0 80px; text-align: center; font-size: 18px; line-height: 21px; letter-spacing: -.3px; color: #222; white-space: nowrap; }
.btn { width: 160px; height: 35px; margin: 3px 20px 0 0; border: 1px solid #35a137; border-radius: 3px; background: #fff; color: #35a137; font-size: 14px; font-weight: 700; }
.btn.solid { background: #35a137; color: #fff; }
.close { position: absolute; right: 10px; top: 10px; }

.cols { display: flex; justify-content: space-between; height: 2349px; }
main { width: 750px; }
aside { width: 330px; padding-top: 10px; }

/* hero map */
.hero { position: relative; height: 443px; overflow: hidden; }
.tag-map, .tag-fav { position: absolute; top: 393px; display: flex; align-items: center; justify-content: center; height: 25px; border-radius: 4px; }
.tag-map { left: 25px; width: 47px; gap: 2px; background: #444c; color: #fff; font-size: 13px; font-weight: 700; letter-spacing: -.5px; }
.tag-fav { right: 25px; width: 30px; background: #777a; }
.stat { display: flex; flex-direction: column; align-items: center; gap: 18px; width: 122px; height: 79px; padding-top: 14px; font-size: 13px; line-height: 17px; }
.tabs { display: flex; align-items: center; height: 53px; padding: 0 8px; background: #111; font-size: 16px; line-height: 37px; color: #ccc; }
.tabs a { padding: 0 26px; }
.tabs .on { width: 117px; padding: 0; text-align: center; border-radius: 18px; background: #fff; color: #444; }

.bar { height: 49px; padding-left: 20px; border-top: 1px solid #e8e8e8; background: #fafafa; font-size: 22px; font-weight: 700; line-height: 45px; color: #444; }
.bar.first { height: 50px; border-top-color: #fff; }
h3 { padding-left: 20px; margin-top: 19px; font-size: 16px; line-height: 22px; font-weight: 700; letter-spacing: -.15px; }
.facts { display: flex; gap: 40px; margin: 18px 20px 0; height: 156px; font-size: 14px; line-height: 34px; letter-spacing: -.25px; color: #333; }
.facts dl { width: 335px; }
.facts dl div { display: flex; height: 34px; padding-left: 10px; }
.facts dl div:nth-child(odd) { background: #fafafa; }
.facts dt { width: 130px; }
.facts dd { width: 195px; overflow: hidden; white-space: nowrap; text-overflow: ellipsis; }
.desc { display: flow-root; height: 252px; border-top: 1px solid #e8e8e8; }
.desc h3 { margin-top: 18px; line-height: 24px; }
.desc p { margin: 17px 0 0 20px; line-height: 21.600px; letter-spacing: -.28px; white-space: nowrap; }
.more { display: flex; justify-content: flex-end; align-items: center; gap: 10px; margin: 44px 24px 0 0; line-height: 20px; letter-spacing: -.2px; color: #35a137; }

.alert { display: flex; align-items: center; gap: 15px; height: 75px; width: 720px; margin: 20px 0 15px 15px; padding-left: 15px; border: 1px solid #a94442; color: #a94442; line-height: 21px; letter-spacing: -.27px; }
.alert svg { margin-top: -5px; }
.alert p { margin-top: -2px; }
.near { display: flex; gap: 20px; padding-left: 17px; height: 214px; }
.near a { width: 164px; height: 162px; border-radius: 5px; overflow: hidden; box-shadow: 0 2px 3px #0004; font-size: 13px; font-weight: 700; }
.near a > svg { width: 164px; height: 100px; }
.near span { display: flex; justify-content: space-between; align-items: center; height: 60px; padding: 0 18px 0 16px; }
.near span svg { margin-top: -3px; }

.bar.split { height: 52px; background: linear-gradient(#fafafa 36px, #fff 36px, #fff 38px, #fafafa 38px); }
.lead { padding: 20px 0 0 20px; height: 59px; font-size: 16px; line-height: 20px; letter-spacing: -.3px; }
.fin { display: flex; width: 711px; height: 733px; margin-left: 20px; border: 1px solid #e6e6e6; border-radius: 5px; overflow: hidden; }
.fin-l { width: 459px; padding: 22px 0 0 20px; background: #fbfbfb; letter-spacing: -.3px; border-right: 1px solid #e6e6e6; }
.fin h4, .fin label { font-size: 16px; line-height: 20px; letter-spacing: -.33px; }
.banks { display: flex; gap: 10.500px; margin-top: 23px; }
.banks span { width: 96.500px; height: 43px; border: 1px solid #eaeaea; background: #fff; }
.banks span.sel { border-color: #35a137; background: #d9f7d9; }
.banks svg { width: 94px; height: 41px; }
.isl { margin-top: 28px; }
.row { display: flex; align-items: center; justify-content: space-between; width: 418px; }
.row.pick { height: 38px; margin-top: 46px; }
.row.pick.two { margin-top: 10px; margin-bottom: -5px; }
.sbox, .ibox { display: flex; align-items: center; width: 201px; height: 38px; border: 1px solid #e8e8e8; border-radius: 4px; background: #fff; }
.sbox { justify-content: space-between; padding: 0 8px; color: #222; }
.sbox b { border: solid transparent; border-width: 7px 6.500px 0; border-top-color: #444; margin-right: 0; }
.rng { height: 73px; padding-top: 17px; }
.rng .row { margin-top: 3px; }
.rng.dp .row { margin-top: 2px; }
.ibox { justify-content: flex-end; padding-right: 6px; color: #111; }
.ibox > small { width: 29px; padding-left: 6px; font-size: 12px; letter-spacing: -.4px; margin-top: 3px; color: #444; }
.ibox.yrs > small { width: 41px; }
.ibox.rate { color: #666; }
.ibox.rate > small { padding-left: 19px; }
.ibox em { display: flex; align-items: center; justify-content: flex-end; width: 61px; height: 36px; padding-right: 8px; margin-right: auto; border-right: 1px solid #e8e8e8; background: #fafafa; color: #444; font-size: 16px; font-weight: 700; }
.ibox em small { font-size: 12px; font-weight: 400; margin: 3px 0 0 3px; }
.sl { position: relative; width: 201px; height: 6px; border-radius: 3px; background: #ddd; box-shadow: inset 0 1px 1px #0002; }
.sl i { display: block; width: 33px; height: 6px; border-radius: 3px; background: #35a137; box-shadow: inset 0 1px 1px #0004; }
.sl i.full { width: 201px; }
.sl u { position: absolute; left: 191px; top: -7px; width: 20px; height: 20px; border: 2px solid #444; border-radius: 50%; background: #fff; }
.sl.p16 u { left: 23px; }
.sl.p47 i { width: 94px; }
.sl.p47 u { left: 84px; }
.dim { opacity: .42; }
.disc { margin-top: 14px; font-size: 12px; line-height: 18.700px; letter-spacing: -.25px; white-space: nowrap; }

.fin-r { width: 251px; text-align: center; }
.fin-r > div { display: flex; flex-direction: column; align-items: center; }
.fin-r h5 { font-size: 12px; font-weight: 700; line-height: 16px; letter-spacing: -.35px; }
.fin-r b { margin-top: 24px; font-size: 14px; line-height: 18px; letter-spacing: -.3px; }
.fin-r strong { line-height: 32px; }
.c1 { height: 144px; padding-top: 19px; border-top: 1px solid #e8e8e8; border-bottom: 2px solid #e8e8e8; }
.c1 strong { margin-top: 8px; font-size: 28px; }
.c2 { height: 150px; padding-top: 27px; border-bottom: 2px solid #e8e8e8; }
.c2 strong { margin-top: 3px; font-size: 22px; }
.c3 { height: 123px; padding-top: 21px; border-bottom: 1px solid #e8e8e8; }
.split2 { width: 199px; height: 35px; margin-top: 12px; background: #49df93; }
.split2 i { display: block; width: 117px; height: 35px; background: #35a137; }
.c3 p { display: flex; justify-content: space-between; width: 199px; margin-top: 10px; font-size: 12px; line-height: 16px; letter-spacing: -.2px; font-weight: 700; color: #55505e; }
.c4 { height: 77px; padding-top: 18px; border-bottom: 1px solid #e8e8e8; }
.c4 button { width: 200px; height: 40px; border-radius: 3px; background: #35a137; color: #fff; font-size: 14px; font-weight: 700; letter-spacing: -.3px; }

/* contact card */
.contact { width: 328px; height: 506px; margin-left: 1px; padding: 19px 20px 0; border-radius: 10px; box-shadow: 0 0 7px #0003; font-size: 12px; }
.price { text-align: center; font-size: 22px; font-weight: 700; line-height: 26px; letter-spacing: -.1px; margin-left: -4px; }
.price small { font-size: 20px; }
.call { display: flex; align-items: center; justify-content: center; gap: 2px; width: 288px; height: 55px; margin: 16px 0; border-radius: 4px; background: #35a137; color: #fff; font-size: 20px; font-weight: 700; }
.call span { display: flex; align-items: center; justify-content: center; width: 39px; height: 39px; padding-right: 5px; border-radius: 50%; background: #44b933; }
.fld { height: 46px; margin-bottom: 7px; padding: 6px 0 0 10px; border: 1px solid #ececee; border-radius: 4px; background: #f8f9fb; color: #777; font-size: 9px; font-weight: 700; line-height: 12px; letter-spacing: -.25px; }
.fld.e { height: 49px; }
.fld.p div { display: flex; align-items: center; gap: 4px; margin-top: 9px; color: #222; font-size: 12px; font-weight: 400; letter-spacing: 0; }
.fld.p div svg { margin-top: 3px; }
.fld.m { height: 69px; margin-bottom: 0; }
.ta { display: flex; justify-content: space-between; height: 43px; margin-top: 1px; overflow: hidden; }
.ta pre { margin-top: -4px; font: 11px/14.100px "DejaVu Sans Mono", monospace; color: #444; letter-spacing: 0; }
.sb { display: flex; flex-direction: column; align-items: center; width: 18px; height: 43px; padding-top: 7px; background: #f1f1f1; }
.sb i { border: solid transparent; border-width: 0 4px 4px; border-bottom-color: #444; }
.sb i.dn { border-width: 4px 4px 0; border-top-color: #999; border-bottom-color: transparent; }
.sb u { width: 13px; height: 9px; margin: 6px 0; background: #c1c1c1; }
.who { display: flex; align-items: center; height: 16px; margin-top: 17px; letter-spacing: -.2px; }
.who i { width: 16px; height: 16px; margin: 0 9px 0 10px; border: 1px solid #bbb; border-radius: 50%; background: #c4c4c4; box-shadow: inset 0 0 0 1.500px #fff; }
.who i.on { border-color: #35a137; background: #35a137; }
.keep { display: flex; align-items: center; gap: 10px; height: 15px; margin-top: 19px; letter-spacing: -.15px; color: #222; }
.send { display: flex; align-items: center; justify-content: center; gap: 7px; width: 288px; height: 48px; margin-top: 20px; border: 1px solid #35a137; border-radius: 4px; color: #35a137; font-size: 15px; font-weight: 700; letter-spacing: 1px; }

.agency { height: 195px; margin-top: 27px; border: 1px solid #e6e6e6; }
.agency h4 { height: 47px; border-bottom: 1px solid #eee; text-align: center; font-size: 16px; line-height: 44px; letter-spacing: -.1px; }
.ag-in { display: flex; gap: 34px; padding: 17px 0 0 20px; }
.ag-r { padding-top: 36px; }
.ag-r p { display: flex; align-items: center; gap: 7px; padding-left: 2px; font-size: 13px; line-height: 18px; white-space: nowrap; }
.ag-r a { display: block; width: 143px; height: 24px; margin-top: 12px; border: 1px solid #0b8fe8; border-radius: 3px; text-align: center; font-size: 9.500px; line-height: 22px; color: #2b8de8; }
.links { height: 306px; margin-top: 25px; border: 1px solid #ddd; }
.links h4 { height: 48px; border-bottom: 1px solid #e6e6e6; text-align: center; font-size: 14px; font-weight: 700; line-height: 48px; color: #444; }
.links ul { padding: 20px 0 0 36px; list-style: none; font-size: 13px; line-height: 23px; color: #222; }

/* trends */
.trends { height: 229px; }
.trends .bar { height: 50px; }
.months { display: flex; gap: 5px; justify-content: flex-end; margin: 21px 25px 13px 0; }
.months a { width: 70px; height: 20px; border-radius: 3px; background: #f4f4f4; text-align: center; font-size: 10px; line-height: 20px; letter-spacing: -.25px; }
.months .on { background: #0b8fe8; color: #fff; }
.trow { display: flex; height: 27px; font-size: 11px; line-height: 16px; letter-spacing: 0; }
.trow span:nth-child(1) { width: 168px; padding-right: 21px; margin-right: -20px; text-align: center; padding-left: 20px; }
.trow span:nth-child(2) { width: 318px; }
.trow span:nth-child(4) { width: 120px; margin-left: auto; margin-right: 55px; text-align: center; }
.trow .pct { display: flex; padding-left: 7px; gap: 4px; line-height: 16px; }
.pct i { width: 394px; height: 15px; background: #35a137; margin-top: -1px; }

/* similar listings */
.similar h2 { height: 48px; padding-left: 21px; font-size: 24px; line-height: 30px; letter-spacing: -.35px; color: #222; white-space: nowrap; }
.cards { display: flex; gap: 9.600px; padding-left: 40px; align-items: center; }
.cards article { width: 248px; height: 390px; box-shadow: 0 3px 7px #0002; color: #222; }
.th-map { position: relative; height: 200px; overflow: hidden; }
.tools { position: absolute; right: 5px; bottom: 5px; border-radius: 3px; background: #555b; }
.add { margin: 16px 0 0 10px; font-size: 12px; line-height: 18px; letter-spacing: -.35px; color: #999; }
.pr { display: flex; align-items: baseline; gap: 6px; margin: 11px 0 0 10px; font-size: 16px; line-height: 22px; letter-spacing: -.3px; font-weight: 700; }
.pr small { font-size: 12px; font-weight: 400; }
.nm { margin: 1px 0 0 10px; font-weight: 700; line-height: 20px; white-space: nowrap; }
.ar { display: flex; align-items: center; gap: 3px; margin: 13px 0 0 12px; font-weight: 700; line-height: 20px; letter-spacing: -.3px; }
.bt { display: flex; gap: 8px; margin: 22px 0 0 10px; }
.bt a { width: 109px; height: 30px; border: 1px solid #35a137; border-radius: 3px; text-align: center; font-size: 14px; font-weight: 700; line-height: 28px; color: #35a137; }
.bt .g { background: #35a137; color: #fff; }
.go { margin: 47px 0 0 10px; }
```
